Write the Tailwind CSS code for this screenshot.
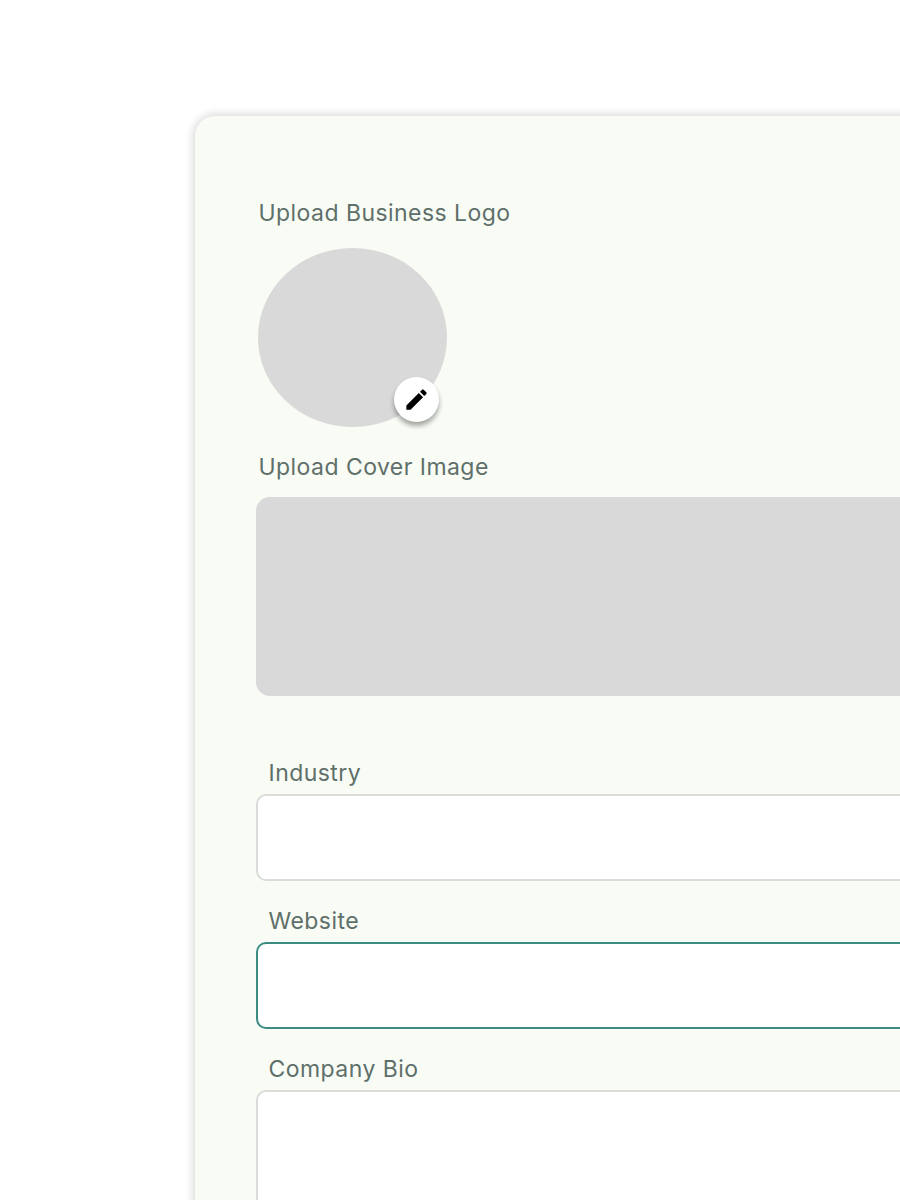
<!DOCTYPE html>
<html lang="en">
<head>
<meta charset="UTF-8">
<title>Business Profile</title>
<script src="https://cdn.jsdelivr.net/npm/@tailwindcss/browser@4"></script>
</head>
<body class="bg-white font-['Inter',sans-serif] overflow-hidden h-[1200px]">

<div class="pt-[116px] pl-[195px] w-[900px] h-[1200px] overflow-hidden">
  <div class="w-[900px] h-[1200px] bg-[#f8fcf5] rounded-tl-[20px] shadow-[0_0_9px_2px_rgba(0,0,0,0.15)] pl-[61px] pt-[83px]">

    <p class="pl-[2.5px] text-[23px] tracking-[0.45px] leading-[28px] text-[#5f6f6a]">Upload Business Logo</p>
    <div class="relative ml-[2px] mt-[21px] w-[189px] h-[179px] rounded-[50%] bg-[#d9d9d9]">
      <button class="absolute left-[136px] top-[129px] w-[45px] h-[45px] rounded-full bg-white flex items-center justify-center shadow-[0_4px_5px_rgba(0,0,0,0.35)]">
        <svg class="w-[27px] h-[27px]" viewBox="0 0 24 24" fill="#000"><path d="M3 17.25V21h3.75L17.81 9.94l-3.75-3.75L3 17.25zM20.71 7.04a1 1 0 0 0 0-1.41l-2.34-2.34a1 1 0 0 0-1.41 0l-1.83 1.83 3.75 3.75 1.83-1.83z"/></svg>
      </button>
    </div>

    <p class="pl-[2.5px] mt-[26px] text-[23px] tracking-[0.45px] leading-[28px] text-[#5f6f6a]">Upload Cover Image</p>
    <div class="mt-[16px] w-[800px] h-[199px] rounded-[14px] bg-[#d9d9d9]"></div>

    <div class="mt-[63px] flex flex-col">
      <label class="pl-[12.5px] text-[23px] tracking-[0.45px] leading-[28px] text-[#5f6f6a]">Industry</label>
      <input class="mt-[7px] w-[800px] h-[87px] rounded-[10px] bg-white border-2 border-[#d9dcd9] outline-none">
      <label class="pl-[12.5px] mt-[26px] text-[23px] tracking-[0.45px] leading-[28px] text-[#5f6f6a]">Website</label>
      <input class="mt-[7px] w-[800px] h-[87px] rounded-[10px] bg-white border-2 border-[#3a8b80] outline-none">
      <label class="pl-[12.5px] mt-[26px] text-[23px] tracking-[0.45px] leading-[28px] text-[#5f6f6a]">Company Bio</label>
      <textarea class="mt-[7px] w-[800px] h-[200px] rounded-[10px] bg-white border-2 border-[#d9dcd9] outline-none resize-none"></textarea>
    </div>

  </div>
</div>

</body>
</html>
